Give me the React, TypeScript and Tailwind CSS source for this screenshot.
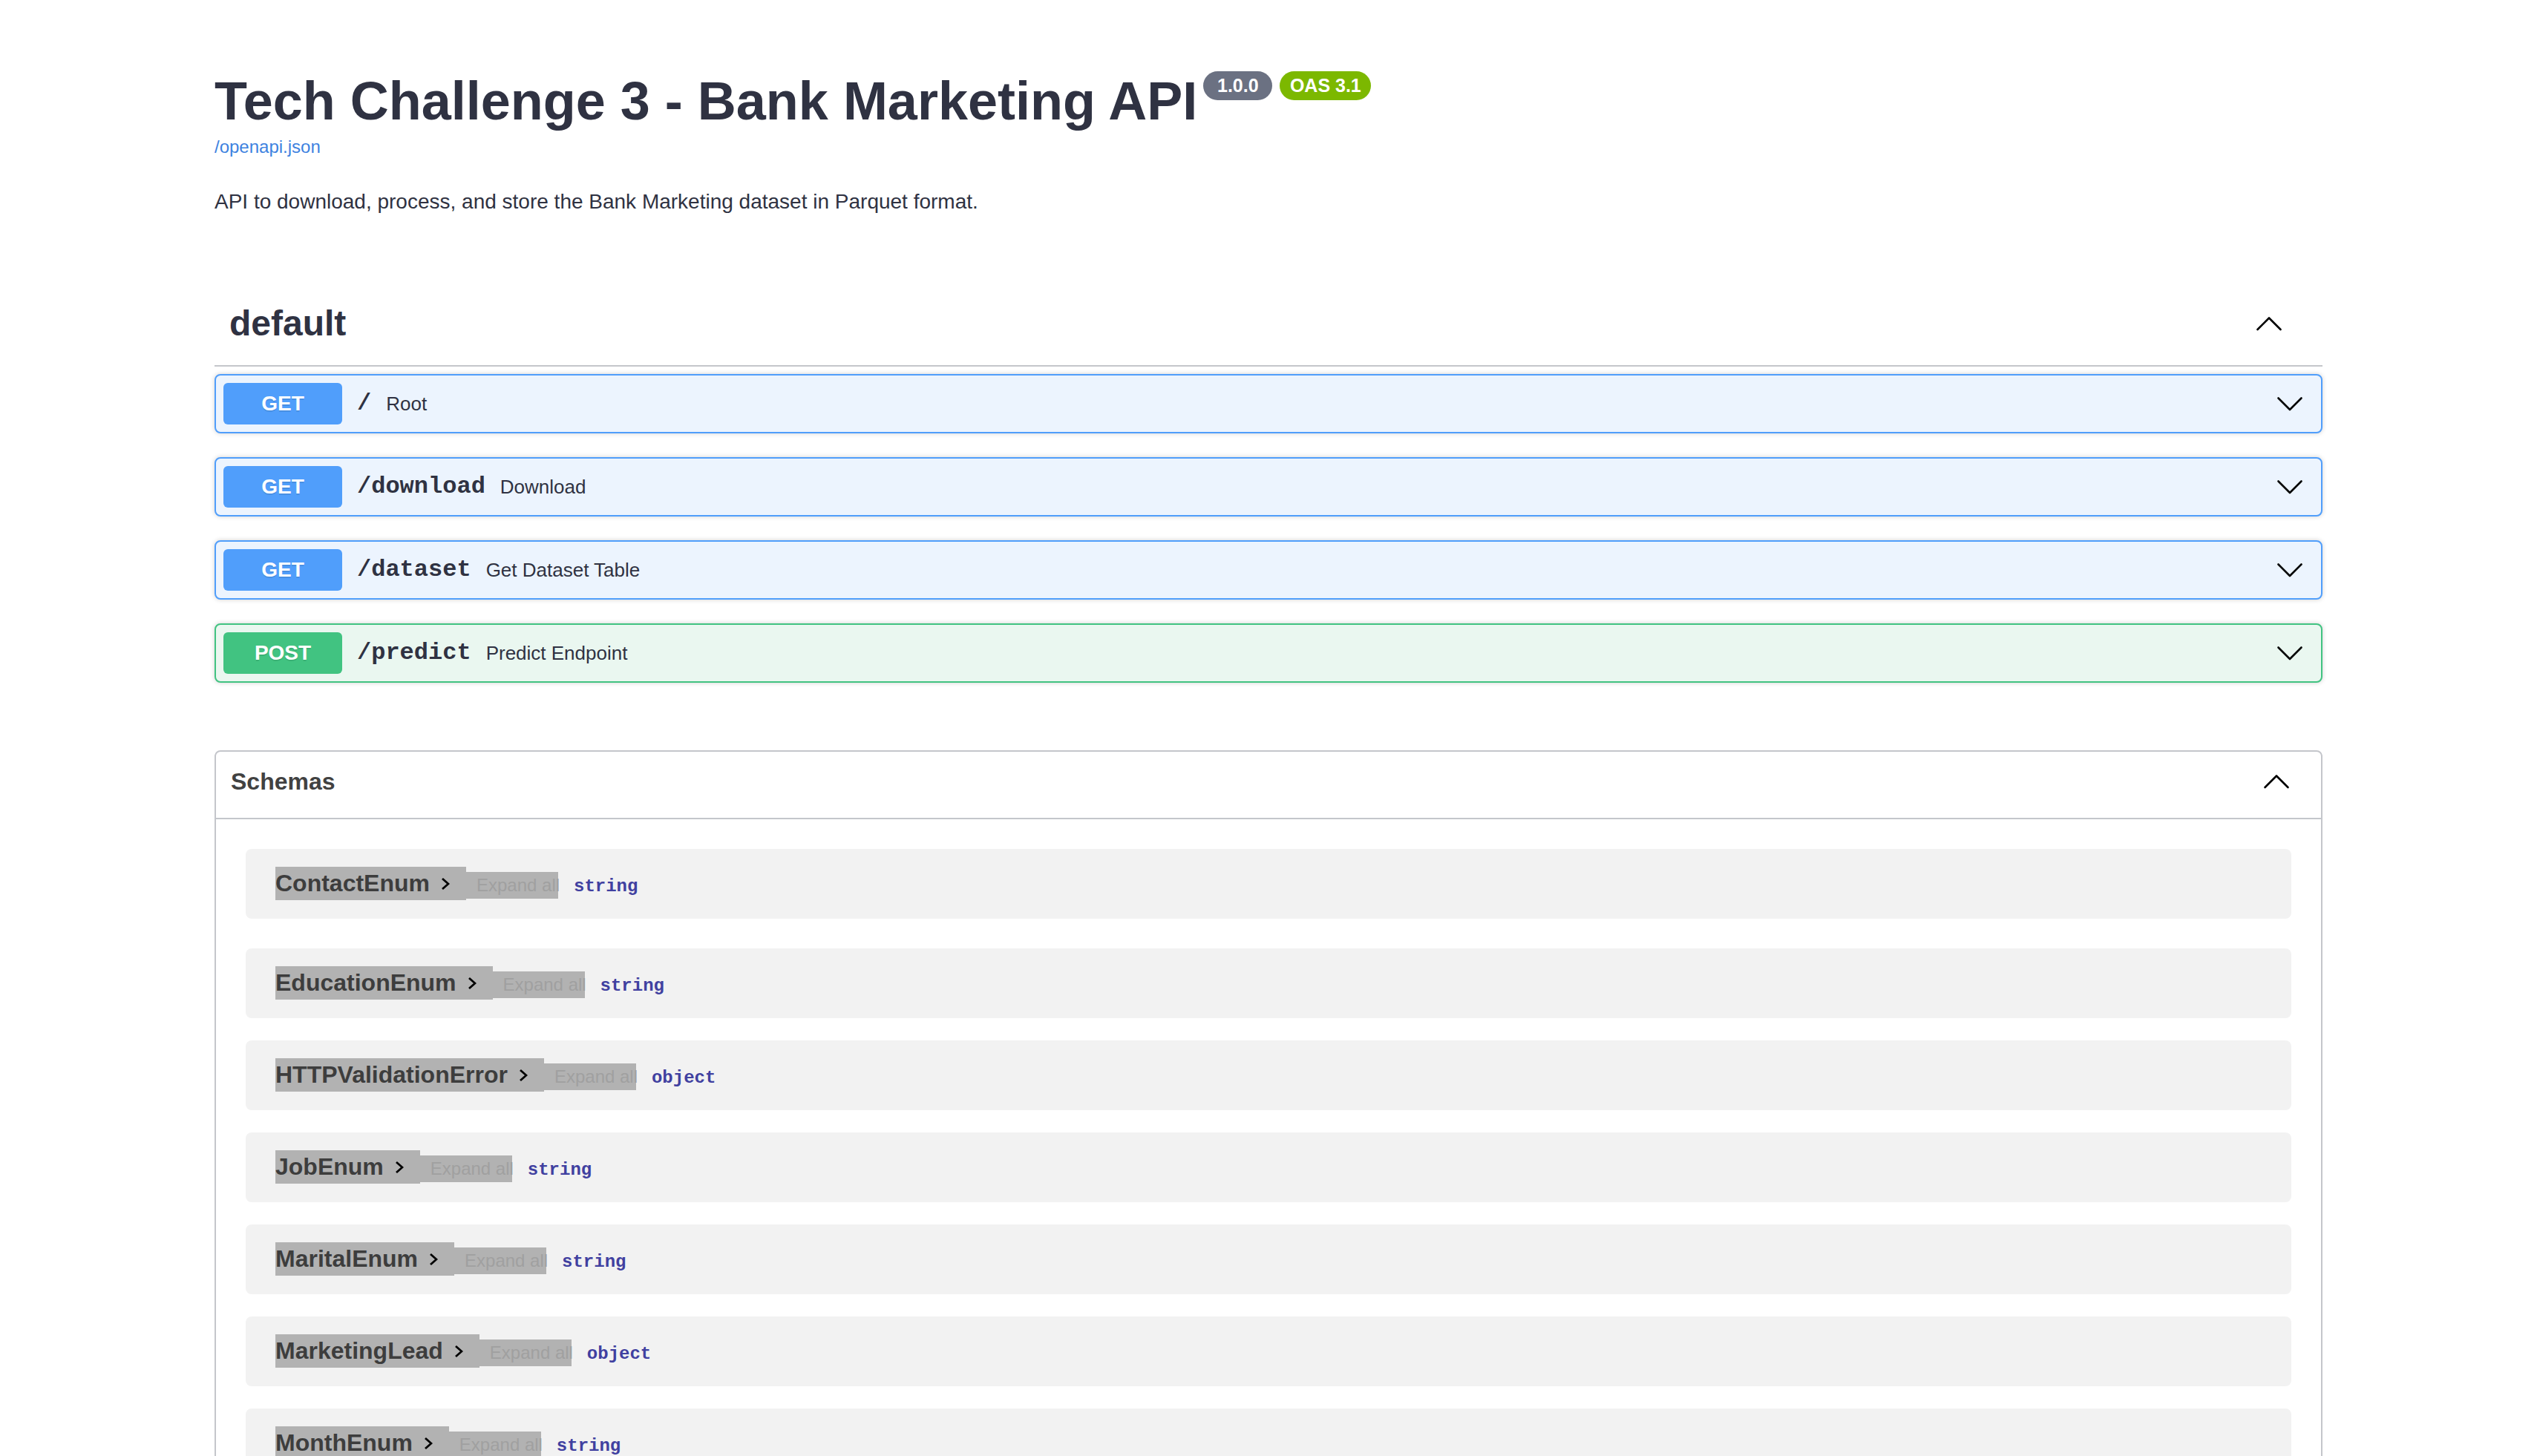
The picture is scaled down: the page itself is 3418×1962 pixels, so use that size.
import React from "react";

type Op = { method: "GET" | "POST"; path: string; desc: string };

const ops: Op[] = [
  { method: "GET", path: "/", desc: "Root" },
  { method: "GET", path: "/download", desc: "Download" },
  { method: "GET", path: "/dataset", desc: "Get Dataset Table" },
  { method: "POST", path: "/predict", desc: "Predict Endpoint" },
];

const schemas: { name: string; type: string }[] = [
  { name: "ContactEnum", type: "string" },
  { name: "EducationEnum", type: "string" },
  { name: "HTTPValidationError", type: "object" },
  { name: "JobEnum", type: "string" },
  { name: "MaritalEnum", type: "string" },
  { name: "MarketingLead", type: "object" },
  { name: "MonthEnum", type: "string" },
];

function ChevronDown() {
  return (
    <svg width="40" height="40" viewBox="0 0 40 40" fill="none" className="shrink-0">
      <polyline
        points="4.5,12.5 20,28 35.5,12.5"
        stroke="#000"
        strokeWidth="2.6"
        strokeLinecap="round"
        strokeLinejoin="round"
      />
    </svg>
  );
}

function ChevronUp() {
  return (
    <svg width="40" height="40" viewBox="0 0 40 40" fill="none" className="shrink-0">
      <polyline
        points="4.5,28 20,12.5 35.5,28"
        stroke="#000"
        strokeWidth="2.6"
        strokeLinecap="round"
        strokeLinejoin="round"
      />
    </svg>
  );
}

function SmallChevron() {
  return (
    <svg width="12" height="18" viewBox="0 0 12 18" fill="none" className="ml-[15px] shrink-0">
      <polyline points="2,2 10,9 2,16" stroke="#000" strokeWidth="2.8" strokeLinecap="butt" strokeLinejoin="miter" />
    </svg>
  );
}

function OpBlock({ op }: { op: Op }) {
  const isGet = op.method === "GET";
  return (
    <div
      className={
        isGet
          ? "flex items-center h-[80px] border-2 border-[#509efb] bg-[#ecf4fe] rounded-[8px] px-[10px] shadow-[0_0_6px_rgba(0,0,0,0.19)]"
          : "flex items-center h-[80px] border-2 border-[#41c381] bg-[#eaf7f0] rounded-[8px] px-[10px] shadow-[0_0_6px_rgba(0,0,0,0.19)]"
      }
    >
      <span
        className={
          isGet
            ? "w-[160px] h-[56px] rounded-[6px] bg-[#509efb] text-white font-bold text-[28px] leading-[56px] text-center [text-shadow:0_2px_0_rgba(0,0,0,0.1)]"
            : "w-[160px] h-[56px] rounded-[6px] bg-[#41c381] text-white font-bold text-[28px] leading-[56px] text-center [text-shadow:0_2px_0_rgba(0,0,0,0.1)]"
        }
      >
        {op.method}
      </span>
      <span className="px-[20px] text-[32px] font-bold text-[#2f3242] [font-family:'Liberation_Mono','Courier_New',monospace]">
        {op.path}
      </span>
      <span className="text-[26px] text-[#2f3242]">{op.desc}</span>
      <span className="ml-auto mr-[12px] flex">
        <ChevronDown />
      </span>
    </div>
  );
}

function SchemaRow({ name, type, first }: { name: string; type: string; first: boolean }) {
  return (
    <div
      className={
        first
          ? "mx-[40px] mb-[40px] h-[94px] rounded-[8px] bg-[#f2f2f2] pl-[40px] pt-[24px] flex items-baseline"
          : "mx-[40px] mb-[30px] h-[94px] rounded-[8px] bg-[#f2f2f2] pl-[40px] pt-[24px] flex items-baseline"
      }
    >
      <span className="inline-flex items-center h-[45px] bg-[#b2b2b2] pr-[22px] text-[32px] leading-[45px] font-bold text-[#3d3d3d]">
        {name}
        <SmallChevron />
      </span>
      <span className="w-[124px] h-[36px] bg-[#b2b2b2] pl-[14px] text-[24px] leading-[36px] text-[#a0a0a0] whitespace-nowrap">
        Expand all
      </span>
      <span className="ml-[21px] text-[24px] font-bold text-[#4040a0] [font-family:'Liberation_Mono','Courier_New',monospace]">
        {type}
      </span>
    </div>
  );
}

export default function App() {
  return (
    <div className="w-full min-h-screen bg-white text-[#2f3242] [font-family:'Liberation_Sans',Arial,Helvetica,sans-serif]">
      <div className="mx-auto w-[2920px] px-[40px] pt-[95px]">
        <div className="flex items-start">
          <h2 className="m-0 text-[72px] leading-[82px] font-bold text-[#2f3242]">
            Tech Challenge 3 - Bank Marketing API
          </h2>
          <span className="ml-[8px] mt-[1px] h-[39px] w-[93px] rounded-full bg-[#6b7182] text-white font-bold text-[25px] leading-[39px] text-center">
            1.0.0
          </span>
          <span className="ml-[10px] mt-[1px] h-[39px] w-[123px] rounded-full bg-[#7cb800] text-white font-bold text-[25px] leading-[39px] text-center">
            OAS 3.1
          </span>
        </div>
        <div className="mt-[7px]">
          <a className="text-[24px] leading-[28px] text-[#3d82e0]">/openapi.json</a>
        </div>
        <p className="mt-[38px] text-[28px] leading-[42px] text-[#2f3242]">
          API to download, process, and store the Bank Marketing dataset in Parquet format.
        </p>

        <div className="mt-[87px]">
          <div className="flex items-center h-[114px] pl-[20px] pr-[52px] border-b-2 border-[#c4c6cb]">
            <h3 className="flex-1 text-[48px] font-bold text-[#2f3242]">default</h3>
            <ChevronUp />
          </div>
          <div className="pt-[10px] flex flex-col gap-[32px]">
            {ops.map((op) => (
              <OpBlock key={op.path} op={op} />
            ))}
          </div>
        </div>

        <section className="mt-[91px] border-2 border-[#c4c6cb] rounded-[8px]">
          <div className="flex items-center h-[91px] pl-[20px] pr-[40px] pb-[10px] border-b-2 border-[#c4c6cb]">
            <h4 className="flex-1 text-[32px] font-bold text-[#414141]">Schemas</h4>
            <ChevronUp />
          </div>
          <div className="pt-[40px] flex flex-col">
            {schemas.map((s, i) => (
              <SchemaRow key={s.name} name={s.name} type={s.type} first={i === 0} />
            ))}
          </div>
        </section>
      </div>
    </div>
  );
}
